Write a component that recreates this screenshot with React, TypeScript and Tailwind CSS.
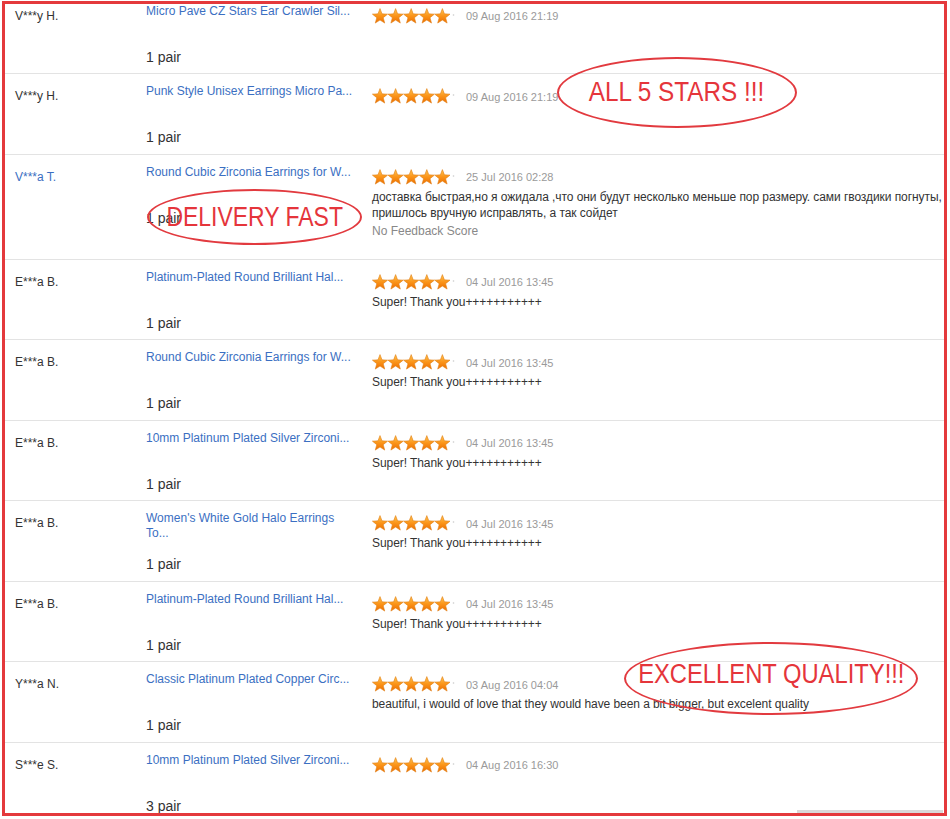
import React from 'react';

type Review = {
  buyer: string;
  buyerLink?: boolean;
  title: string[];
  date: string;
  comment?: string[];
  noScore?: boolean;
  qty: string;
};

const thanks = 'Super! Thank you+++++++++++';

const reviews: Review[] = [
  { buyer: 'V***y H.', title: ['Micro Pave CZ Stars Ear Crawler Sil...'], date: '09 Aug 2016 21:19', qty: '1 pair' },
  { buyer: 'V***y H.', title: ['Punk Style Unisex Earrings Micro Pa...'], date: '09 Aug 2016 21:19', qty: '1 pair' },
  {
    buyer: 'V***a T.',
    buyerLink: true,
    title: ['Round Cubic Zirconia Earrings for W...'],
    date: '25 Jul 2016 02:28',
    comment: [
      'доставка быстрая,но я ожидала ,что они будут несколько меньше пор размеру. сами гвоздики погнуты,',
      'пришлось вручную исправлять, а так сойдет',
    ],
    noScore: true,
    qty: '1 pair',
  },
  { buyer: 'E***a B.', title: ['Platinum-Plated Round Brilliant Hal...'], date: '04 Jul 2016 13:45', comment: [thanks], qty: '1 pair' },
  { buyer: 'E***a B.', title: ['Round Cubic Zirconia Earrings for W...'], date: '04 Jul 2016 13:45', comment: [thanks], qty: '1 pair' },
  { buyer: 'E***a B.', title: ['10mm Platinum Plated Silver Zirconi...'], date: '04 Jul 2016 13:45', comment: [thanks], qty: '1 pair' },
  { buyer: 'E***a B.', title: ["Women's White Gold Halo Earrings", 'To...'], date: '04 Jul 2016 13:45', comment: [thanks], qty: '1 pair' },
  { buyer: 'E***a B.', title: ['Platinum-Plated Round Brilliant Hal...'], date: '04 Jul 2016 13:45', comment: [thanks], qty: '1 pair' },
  {
    buyer: 'Y***a N.',
    title: ['Classic Platinum Plated Copper Circ...'],
    date: '03 Aug 2016 04:04',
    comment: ['beautiful, i would of love that they would have been a bit bigger, but excelent quality'],
    qty: '1 pair',
  },
  { buyer: 'S***e S.', title: ['10mm Platinum Plated Silver Zirconi...'], date: '04 Aug 2016 16:30', qty: '3 pair' },
];

const STAR = '8,0.6 10,5.85 15.6,6.13 11.23,9.65 12.7,15.07 8,12 3.3,15.07 4.77,9.65 0.4,6.13 6,5.85';

function Stars() {
  return (
    <svg width="84" height="16" viewBox="0 0 84 16" className="block">
      <defs>
        <linearGradient id="starFill" x1="0" y1="0" x2="0" y2="1">
          <stop offset="0" stopColor="#ffc552" />
          <stop offset="0.5" stopColor="#fb951a" />
          <stop offset="1" stopColor="#ec6e00" />
        </linearGradient>
      </defs>
      {[0, 1, 2, 3, 4].map((i) => (
        <polygon
          key={i}
          points={STAR}
          transform={`translate(${i * 15.6} 0)`}
          fill="url(#starFill)"
          stroke="#e07f16"
          strokeWidth="0.6"
          strokeLinejoin="round"
        />
      ))}
      <circle cx="81.5" cy="7" r="0.8" fill="#c9c9c9" />
    </svg>
  );
}

function Row({ r }: { r: Review }) {
  return (
    <div className="grid grid-cols-[141px_226px_1fr] border-b border-[#e3e3e3]">
      <div className={`pl-[10px] pt-[15px] text-[12px] leading-[15px] ${r.buyerLink ? 'text-[#3b6fc2]' : 'text-[#333]'}`}>
        {r.buyer}
      </div>
      <div className="pt-[10px] pb-[7.5px]">
        <div className="h-[30px] text-[12px] leading-[15px] text-[#3b6fc2] whitespace-nowrap">
          {r.title.map((t, i) => (
            <div key={i}>{t}</div>
          ))}
        </div>
        <div className="mt-[14px] text-[14px] leading-[18px] text-[#333]">{r.qty}</div>
      </div>
      <div className="pt-[14px] pb-[20px]">
        <div className="flex items-center h-[16px]">
          <Stars />
          <span className="ml-[10px] text-[11px] leading-[16px] text-[#9a9a9a] pt-[1px]">{r.date}</span>
        </div>
        {r.comment && (
          <div className="mt-[4px] text-[12px] leading-[16px] tracking-[-0.07px] text-[#333] whitespace-nowrap">
            {r.comment.map((c, i) => (
              <div key={i}>{c}</div>
            ))}
          </div>
        )}
        {r.noScore && <div className="mt-[2px] text-[12px] leading-[16px] text-[#888]">No Feedback Score</div>}
      </div>
    </div>
  );
}

function Callout({ text, className, textClass }: { text: string; className: string; textClass: string }) {
  return (
    <div className={`absolute flex items-center justify-center rounded-[50%] border-[2.5px] border-[#e23a3f] ${className}`}>
      <span className={`whitespace-nowrap leading-none text-[#e5353b] ${textClass}`}>{text}</span>
    </div>
  );
}

export default function App() {
  return (
    <div className="w-[950px] h-[819px] bg-white pl-[2px] pt-[1px] font-['Liberation_Sans',Arial,sans-serif]">
      <div className="relative w-[945px] h-[815px] border-[3px] border-[#e4393c] overflow-hidden bg-white">
        <div className="-mt-[10.5px]">
          {reviews.map((r, i) => (
            <Row key={i} r={r} />
          ))}
        </div>

        <Callout
          text="ALL 5 STARS !!!"
          className="left-[552px] top-[53px] w-[240px] h-[71px]"
          textClass="text-[27px] scale-x-[0.9]"
        />
        <Callout
          text="DELIVERY FAST"
          className="left-[142px] top-[185px] w-[215px] h-[56px]"
          textClass="text-[28px] scale-x-[0.82]"
        />
        <Callout
          text="EXCELLENT QUALITY!!!"
          className="left-[619px] top-[638px] w-[294px] h-[73px] pb-[8px]"
          textClass="text-[27px] scale-x-[0.88]"
        />

        <div className="absolute bottom-0 right-[1px] w-[146px] h-[3px] bg-[#d9d9d9]" />
      </div>
    </div>
  );
}
